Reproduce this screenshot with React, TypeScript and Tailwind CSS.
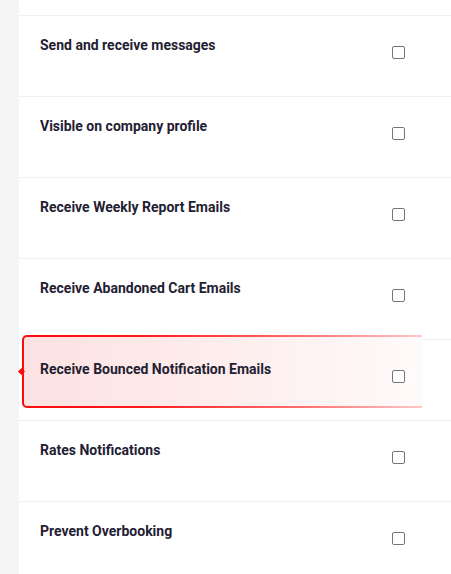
const rows = [
  'Send and receive messages',
  'Visible on company profile',
  'Receive Weekly Report Emails',
  'Receive Abandoned Cart Emails',
  'Receive Bounced Notification Emails',
  'Rates Notifications',
  'Prevent Overbooking',
]

const HIGHLIGHT = 4

export default function App() {
  return (
    <div
      className="flex min-h-[574px] w-full bg-white overflow-hidden"
      style={{ fontFamily: 'Roboto, "Liberation Sans", sans-serif' }}
    >
      {/* SIDE STRIP */}
      <div className="w-[19px] shrink-0 bg-[#f5f5f5]" />

      {/* LIST */}
      <div className="flex-1 flex flex-col">
        <div className="h-[16px] shrink-0 border-b border-[#f1f1f1]" />
        {rows.map((label, i) => (
          <div
            key={label}
            className="relative h-[81px] shrink-0 border-b border-[#f1f1f1]"
          >
            {i === HIGHLIGHT && (
              <div className="absolute left-[3px] top-[-5px] w-[400px] h-[73px]">
                <div className="h-full rounded-l-[5px] p-[2px] pr-0 bg-[linear-gradient(to_right,#ff0a0a,#ff1a1a_30%,#ff7070_70%,#ffc8c8)]">
                  <div className="h-full rounded-l-[3px] bg-[linear-gradient(to_right,#fde2e2,#feeded_50%,#fffafa)]" />
                </div>
                <div className="absolute left-[-3px] top-[34px] w-[5px] h-[5px] rotate-45 bg-[#ff0a0a]" />
              </div>
            )}
            <div className="relative z-10 grid grid-cols-[1fr_59px] pl-[21px]">
              <span className="pt-[19px] text-[14px] leading-5 font-bold text-[#1f2132]">
                {label}
              </span>
              <div className="pt-[30px]">
                <span className="block w-[13px] h-[13px] rounded-[2px] border border-[#767676] bg-white" />
              </div>
            </div>
          </div>
        ))}
      </div>
    </div>
  )
}
